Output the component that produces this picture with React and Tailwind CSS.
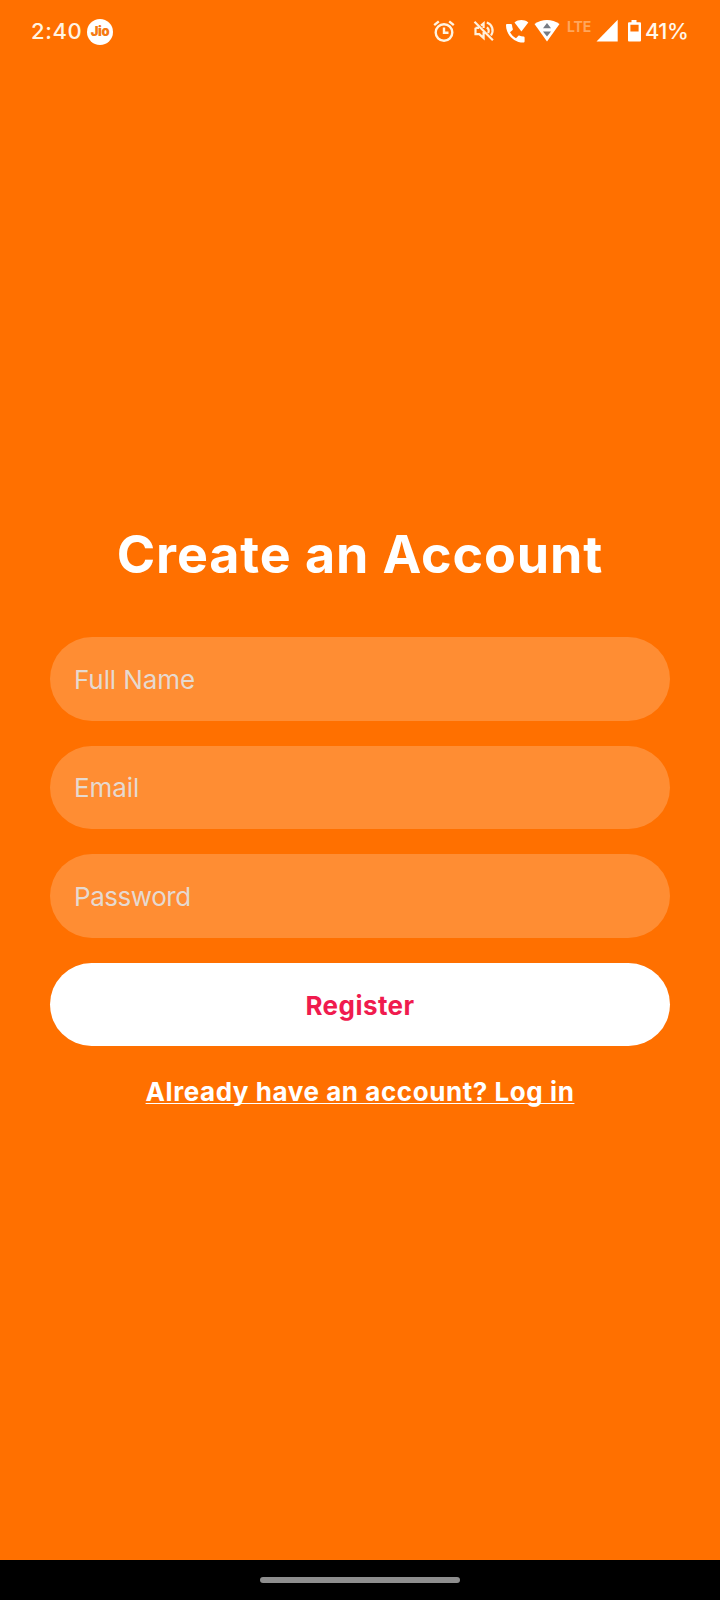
import React from 'react';

function StatusIcons() {
  return (
    <div className="flex items-start text-white">
      <svg className="mr-[18px] mt-[1px] h-[23px] w-[22px]" viewBox="0 0 22 23" fill="none" stroke="#fff4e2" strokeWidth="2.4">
        <circle cx="11" cy="12.5" r="8.3" />
        <path d="M1.2 5.2 5.8 1.3M20.8 5.2 16.2 1.3M11 7.500v5.300h4.500" />
      </svg>
      <svg className="mr-[10px] mt-[1px] h-[22px] w-[22px]" viewBox="0 0 22 22" fill="none" stroke="#fff0dc" strokeWidth="2.2">
        <path d="M2.500 7.800v6.400h3.800l4.300 3.800v-6M2.500 7.800H6M8 5.500l2.600-2.200V8M13.800 7.500c1.800 1.200 2.300 3.500 1.400 5.600M13.800 2.500c5.600 2 7.400 8 4.200 13M1.500 1.800l18.400 18.400" />
      </svg>
      <svg className="mr-[5px] h-[25px] w-[24px]" viewBox="0 0 24 25" fill="#fff">
        <path d="M1 6.200c0-.8.500-1.200 1.200-1.200h3.500c.8 0 1.200.4 1.300 1.100.1 1.400.4 2.700.8 3.800.1.500 0 .9-.4 1.300L5 13.300c1.500 2.700 3.300 4.500 6 5.900l2.200-2.200c.4-.4.900-.5 1.400-.3 1.200.4 2.400.7 3.700.7.800 0 1.300.5 1.300 1.200v3.600c0 .8-.5 1.300-1.300 1.300C8.800 23.500 1 15.500 1 6.200Z" />
        <path d="M9.500 3.500c4.200-3.200 9.600-3.200 13.800 0L16.400 12.500Z" />
      </svg>
      <svg className="mr-[7px] h-[24px] w-[26px]" viewBox="0 0 26 24" fill="#fff">
        <path d="M.5 5C8-.4 18-.4 25.500 5L13 22.600Z" />
        <path d="m13 4 4 5.300H9ZM13 17.500l-4-5h8Z" fill="#777c84" />
      </svg>
      <span className="mr-[3px] mt-[1px] w-[26px] text-[14px] font-bold leading-[14px] tracking-[-0.1px] text-[#ffa65c]">LTE</span>
      <svg className="mr-[9px] h-[23px] w-[22px]" viewBox="0 0 22 23" fill="#fff">
        <path d="M.5 22.500 21.700.8v21.700Z" />
      </svg>
      <svg className="mr-[3px] h-[23px] w-[15px]" viewBox="0 0 15 23" fill="#fff">
        <path fillRule="evenodd" d="M4.500 1h5v2.200h3.200c.8 0 1.300.5 1.300 1.300v16.700c0 .8-.5 1.300-1.300 1.300H2.300c-.8 0-1.300-.5-1.300-1.300V4.500c0-.8.5-1.300 1.300-1.300h2.200ZM3.400 5.800v6.700h8.200V5.800Z" />
      </svg>
      <span className="-mt-[1px] w-[45px] whitespace-nowrap text-[22px] font-medium leading-[26px] tracking-[-0.5px] text-[#fff8ec]">41%</span>
    </div>
  );
}

function Field({ label, type, tracking }) {
  return (
    <input
      type={type}
      placeholder={label}
      aria-label={label}
      className={`h-[83.300px] w-full rounded-[42px] bg-[#ff8d33] px-[24px] text-[26px] text-white outline-none placeholder:text-[#e6d9d0] placeholder:opacity-100 ${tracking}`}
    />
  );
}

export default function App() {
  return (
    <div className="flex h-[1600px] w-[720px] flex-col overflow-hidden bg-[#ff7000] font-['Inter',sans-serif]">
      <header className="flex h-[62px] shrink-0 items-start justify-between pl-[31px] pr-[30px] pt-[19px]">
        <div className="flex items-center">
          <span className="w-[56px] pb-[2px] text-[22px] font-medium leading-[24px] tracking-[0.6px] text-[#fff4e2]">2:40</span>
          <span className="flex h-[26px] w-[26px] items-center justify-center rounded-full bg-white pb-[1px] text-[13px] font-black tracking-[-0.4px] text-[#f57a12]">Jio</span>
        </div>
        <StatusIcons />
      </header>
      <main className="flex grow flex-col items-center px-[50px] pt-[461px]">
        <h1 className="h-[114.400px] whitespace-nowrap text-[52px] font-bold leading-[64px] tracking-[0.9px] text-white">Create an Account</h1>
        <form className="flex w-full flex-col gap-[25.200px]" onSubmit={(e) => e.preventDefault()}>
          <Field label="Full Name" type="text" tracking="tracking-[-0.1px]" />
          <Field label="Email" type="email" tracking="tracking-[-0.1px]" />
          <Field label="Password" type="password" tracking="tracking-[-0.45px]" />
          <button className="h-[83.300px] rounded-[42px] bg-white pt-[2px] text-[26px] font-bold tracking-[0.45px] text-[#f01b4e]">Register</button>
        </form>
        <a href="#" className="mt-[29px] whitespace-nowrap text-[26px] font-bold leading-[34px] tracking-[0.56px] text-white underline decoration-1 underline-offset-[2px] [text-decoration-skip-ink:none]">
          Already have an account? Log in
        </a>
      </main>
      <footer className="flex h-[40px] shrink-0 items-center justify-center bg-black">
        <div className="h-[6px] w-[200px] rounded-full bg-[#8e8e8e]" />
      </footer>
    </div>
  );
}
